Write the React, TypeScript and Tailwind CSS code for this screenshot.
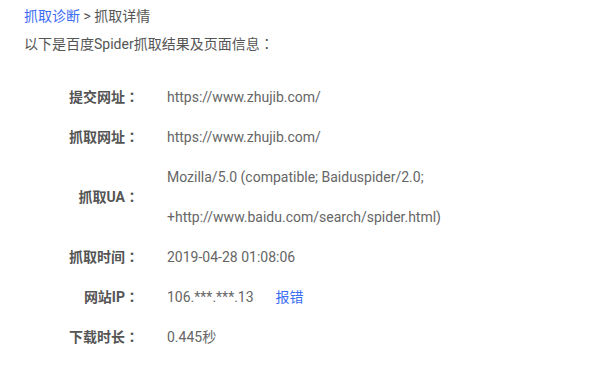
import React from 'react';

const Colon = () => <span className="font-['Noto_Sans_CJK_TC',sans-serif] leading-none">：</span>;

const rows: { label: string; value: React.ReactNode }[] = [
  { label: '提交网址', value: 'https://www.zhujib.com/' },
  { label: '抓取网址', value: 'https://www.zhujib.com/' },
  {
    label: '抓取UA',
    value: (
      <>
        Mozilla/5.0 (compatible; Baiduspider/2.0;
        <br />
        +http://www.baidu.com/search/spider.html)
      </>
    ),
  },
  { label: '抓取时间', value: '2019-04-28 01:08:06' },
  {
    label: '网站IP',
    value: (
      <>
        106.***.***.13
        <a className="ml-[22px] text-[#3b6cf5] cursor-pointer">报错</a>
      </>
    ),
  },
  { label: '下载时长', value: '0.445秒' },
];

export default function App() {
  return (
    <div
      className="min-h-screen bg-white text-[14px] text-[#666] px-6 pt-[6px]"
      style={{ fontFamily: 'Roboto, "Noto Sans CJK SC", sans-serif' }}
    >
      {/* Breadcrumb */}
      <div className="leading-5">
        <a className="text-[#3b6cf5] cursor-pointer">抓取诊断</a>
        <span className="text-[#555]"> &gt; 抓取详情</span>
      </div>
      <p className="leading-5 mt-2 text-[#555]">
        以下是百度Spider抓取结果及页面信息<Colon />
      </p>

      {/* Detail table */}
      <div className="mt-[23px]">
        {rows.map((r) => (
          <div key={r.label} className="flex items-center">
            <div className="w-[115px] text-right font-bold text-[#555] leading-10 shrink-0">
              {r.label}
              <Colon />
            </div>
            <div className="pl-[28px] leading-10">{r.value}</div>
          </div>
        ))}
      </div>
    </div>
  );
}
